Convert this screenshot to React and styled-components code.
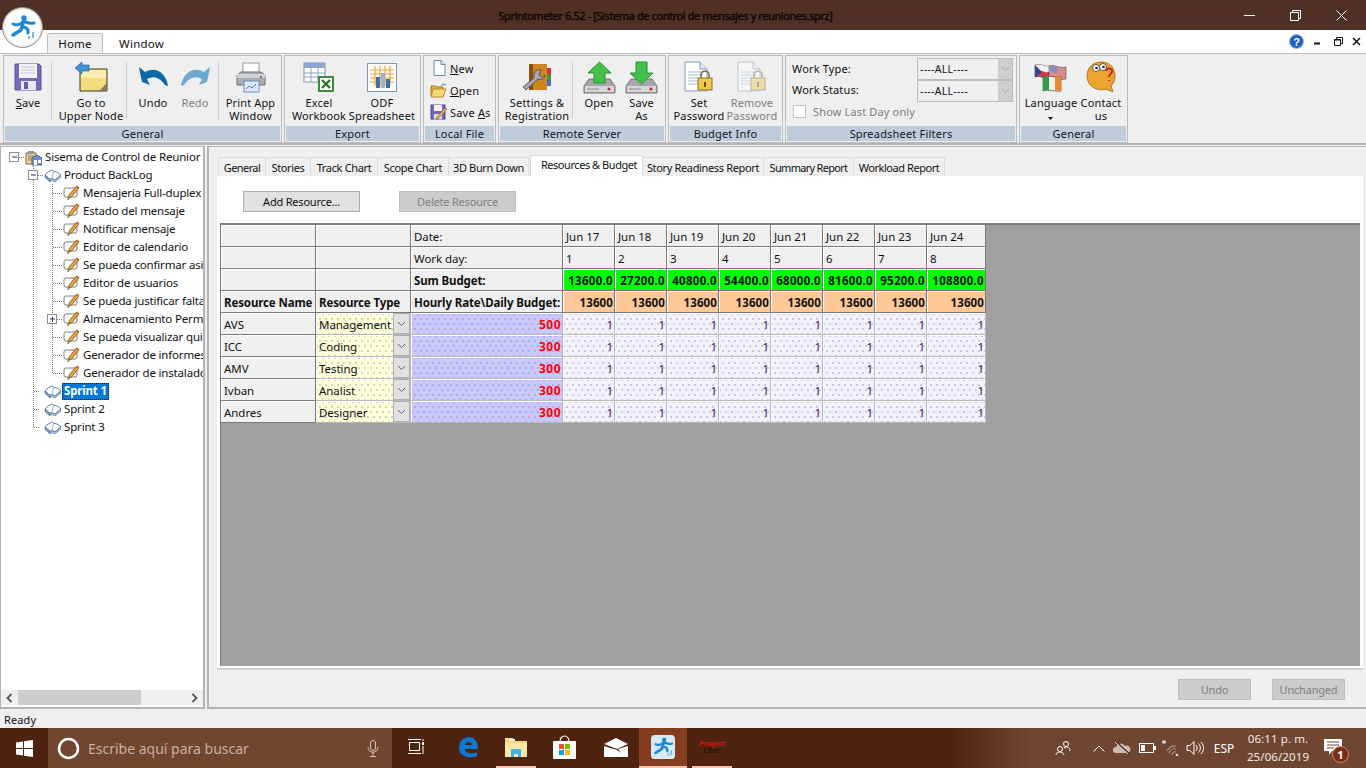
import React from 'react';
import styled, { createGlobalStyle } from 'styled-components';

const Global = createGlobalStyle`
  html, body { margin: 0; padding: 0; height: 768px; overflow: hidden; }
  body { font-family: "Noto Sans", "Open Sans", "Liberation Sans", sans-serif; font-size: 11.5px; color: #111; background: #efefef; }
  * { box-sizing: border-box; }
`;

const Window = styled.div`width: 1366px; height: 768px; display: flex; flex-direction: column; overflow: hidden; position: relative;`;

/* title bar */
const TitleBar = styled.div`height: 30px; background: #503024; display: flex; align-items: center; position: relative; padding-left: 499px;`;
const TitleText = styled.div`width: 333px; font-size: 11px; letter-spacing: -.4px; color: #0c0604; text-align: center; white-space: nowrap; -webkit-text-stroke: .35px #0c0604; margin-top: 1px; display: flex; justify-content: center;`;
const WinControls = styled.div`margin-left: auto; display: flex; width: 138px; height: 30px; margin-right: 2px;`;
const WinControl = styled.div`width: 46px; display: flex; align-items: center; justify-content: center;`;
const LogoBadge = styled.div`position: absolute; left: 2px; top: 7px; width: 41px; height: 41px; border-radius: 50%; background: #fff; border: 1px solid #8d8d8d; box-shadow: inset 0 0 3px #bbb; display: flex; align-items: center; justify-content: center; z-index: 3;`;

/* ribbon */
const TabStrip = styled.div`height: 23px; background: #fff; display: flex; align-items: flex-end; padding-left: 47px;`;
const RibbonTab = styled.div`
  width: ${p => p.$w}px; height: 20px; display: flex; align-items: center; justify-content: center; font-size: 11.5px; letter-spacing: .2px;
  background: ${p => p.$active ? '#efefef' : 'transparent'};
  border: 1px solid ${p => p.$active ? '#bdbdbd' : 'transparent'}; border-bottom: 0; border-radius: 3px 3px 0 0;
`;
const MdiIcons = styled.div`margin-left: auto; display: flex; align-items: center; height: 23px; padding-right: 1px;`;
const MdiSlot = styled.div`width: ${p => p.$w || 19}px; display: flex; justify-content: center; align-items: center;`;
const Ribbon = styled.div`height: 92px; background: #efefef; border-top: 1px solid #bdbdbd; border-bottom: 2px solid #b4b4b4; display: flex; gap: 2px; padding: 1px 0 0 3px;`;
const Group = styled.div`width: ${p => p.$w}px; height: 88px; border: 1px solid #bcbcbc; display: flex; flex-direction: column; padding: 1px;`;
const GroupBody = styled.div`height: 69px; display: flex;`;
const GroupCaption = styled.div`height: 15px; background: #bfcddb; text-align: center; font-size: 11px; line-height: 15px; letter-spacing: .2px; color: #10161c;`;
const BigButton = styled.div`width: ${p => p.$w}px; padding-left: ${p => p.$pl || 0}px; margin-right: ${p => p.$mr || 0}px; display: flex; flex-direction: column; align-items: center; color: ${p => p.$off ? '#7f7f7f' : '#111'}; flex: none;`;
const BigIcon = styled.div`height: 38px; display: flex; align-items: center; justify-content: center; padding-top: 2px;`;
const BigLabel = styled.div`font-size: 11px; line-height: 13px; text-align: center; white-space: nowrap; letter-spacing: .15px; margin-top: 1px;`;
const RibbonSep = styled.div`width: 1px; height: 57px; margin: 5px 0 0; background: #d0d0d0; flex: none;`;
const Accel = styled.span`text-decoration: underline;`;
const SmallCol = styled.div`display: flex; flex-direction: column; padding: 0 0 0 5px;`;
const SmallRow = styled.div`height: 22px; display: flex; align-items: center; gap: 3px; font-size: 11px; letter-spacing: .2px;`;
const SmallIcon = styled.div`width: 17px; display: flex; justify-content: center;`;
const FilterGrid = styled.div`display: grid; grid-template-columns: 125px 96px; grid-auto-rows: 22px; padding: 1px 0 0 5px; align-items: center; font-size: 11px; letter-spacing: .15px;`;
const FilterLabel = styled.span`margin-top: ${p => p.$up}px;`;
const Combo = styled.div`height: 22px; background: #f0f0f3; border: 1px solid #bcbcbc; display: flex; align-items: center; justify-content: space-between; padding-left: 2px; font-size: 10.5px; letter-spacing: .3px;`;
const ComboButton = styled.div`width: 14px; height: 20px; background: #cfcfcf; display: flex; align-items: center; justify-content: center;`;
const CheckRow = styled.div`grid-column: 1 / 3; display: flex; align-items: center; gap: 7px; color: #7d7d7d; padding-left: 1px; margin-top: -4px;`;
const CheckBox = styled.div`width: 13px; height: 13px; background: #fff; border: 1px solid #c4c4c4;`;

/* body */
const Main = styled.div`height: 564px; display: flex; gap: 2px; padding-top: 1px;`;
const TreePanel = styled.div`width: 205px; flex: none; background: #fff; border: 2px solid #b4b4b4; border-top-width: 1px; border-left-width: 1px; display: flex; flex-direction: column; justify-content: space-between; padding-top: 1px;`;
const TreeList = styled.div`overflow: hidden; width: 100%;`;
const TreeRow = styled.div`height: 18px; display: flex; align-items: center; white-space: nowrap; overflow: hidden; font-size: 11.5px; letter-spacing: -.17px;`;
const TreeGutter = styled.svg`flex: none; display: block;`;
const TreeLabel = styled.span`
  margin-left: 1px; padding: 0 2px; line-height: 16px; height: 17px;
  ${p => p.$sel && 'background:#0078d7;color:#fff;font-weight:700;outline:1px dotted #222;outline-offset:-1px;'}
`;
const HScroll = styled.div`height: 15px; background: #f0f0f0; display: flex; align-items: center; margin-bottom: 2px;`;
const ScrollEnd = styled.div`width: 17px; display: flex; align-items: center; justify-content: center; flex: none;`;
const ScrollThumb = styled.div`width: 123px; height: 15px; background: #cdcdcd;`;
const ScrollRest = styled.div`flex: 1;`;

const ContentPanel = styled.div`flex: 1; border: 2px solid #b4b4b4; border-top-width: 1px; border-right: 0; display: flex; flex-direction: column; padding: 8px 0 0 8px; background: #efefef;`;
const TabsRow = styled.div`height: 21px; display: flex; align-items: flex-end; padding-left: 1px;`;
const PageTab = styled.div`
  width: ${p => p.$w}px; height: ${p => p.$active ? 21 : 19}px; background: ${p => p.$active ? '#fff' : '#efefef'};
  border: 1px solid #dcdcdc; border-bottom: 0; border-left: ${p => p.$first ? '1px solid #dcdcdc' : 0};
  ${p => p.$active && 'border-left:1px solid #dcdcdc;margin-left:1px;padding-left:5px;'}
  display: flex; align-items: center; justify-content: center; font-size: 11px; white-space: nowrap; letter-spacing: ${p => p.$ls || '-.35px'};
  padding-bottom: ${p => p.$active ? 3 : 0}px;
`;
const Page = styled.div`width: 1146px; height: 494px; background: #fff; border-bottom: 2px solid #d4d4d4; display: flex; flex-direction: column; padding: 15px 3px 0 3px;`;
const PageTools = styled.div`display: flex; gap: 39px; padding-left: 23px; height: 32px;`;
const PushButton = styled.div`
  width: ${p => p.$w || 117}px; height: 21px; background: ${p => p.$off ? '#cccccc' : '#e1e1e1'}; border: 1px solid ${p => p.$off ? '#bfbfbf' : '#adadad'};
  color: ${p => p.$off ? '#808080' : '#111'}; display: flex; align-items: center; justify-content: center; font-size: 11px; letter-spacing: -.2px;
`;
const SheetArea = styled.div`height: 443px; background: #a0a0a0; border-top: 2px solid #7a7a7a; border-left: 1px solid #7a7a7a;`;
const Sheet = styled.div`display: grid; grid-template-columns: 95px 95px 152px repeat(7, 52px) 59px; grid-auto-rows: 22px; width: 765px;`;
const dots = `
  background-image:
    radial-gradient(circle at 1px 1px, #777 .5px, transparent .8px),
    radial-gradient(circle at 4px 6px, #777 .5px, transparent .8px);
  background-size: 6px 10px;
`;
const bgs = { head: '#efefef', green: '#00ff00', orange: '#ffc896', name: '#f0f0f0', type: '#ffffdc', rate: '#c8c8ff', day: '#f1f1ff' };
const spacing = { green: '.3px', orange: '.12px', rate: '.45px' };
const Cell = styled.div`
  background-color: ${p => bgs[p.$kind] || '#efefef'};
  ${p => (p.$kind === 'type' || p.$kind === 'rate' || p.$kind === 'day') && dots}
  border-right: 1px solid ${p => p.$data ? '#b9b9b9' : '#7a7a7a'};
  border-bottom: 1px solid ${p => p.$data ? '#b9b9b9' : '#7a7a7a'};
  ${p => p.$kind === 'name' && 'border-right-color:#7a7a7a;border-bottom-color:#7a7a7a;'}
  box-shadow: inset 1px 1px 0 #fff;
  display: flex; align-items: center; justify-content: ${p => p.$right ? 'flex-end' : 'flex-start'};
  padding: 1px ${p => p.$right ? 1 : 0}px 0 ${p => p.$right ? 0 : 3}px;
  font-size: ${p => p.$kind === 'rate' ? 12 : 11.5}px; white-space: nowrap; overflow: hidden;
  letter-spacing: ${p => spacing[p.$kind] || (p.$bold ? '-.12px' : '-.05px')};
  font-weight: ${p => p.$bold ? 700 : 400};
  color: ${p => p.$color || '#111'};
`;
const TypeCell = styled(Cell)`padding-right: 0; justify-content: space-between;`;
const CellDrop = styled.div`width: 17px; height: 21px; background: #e1e1e1; border: 1px solid #adadad; display: flex; align-items: center; justify-content: center; flex: none; margin-top: -1px;`;
const BottomBar = styled.div`flex: 1; display: flex; justify-content: flex-end; gap: 21px; padding: 9px 21px 0 0;`;
const StatusBar = styled.div`height: 19px; background: #efefef; font-size: 11px; display: flex; align-items: center; padding: 1px 0 0 4px; letter-spacing: .1px;`;

/* taskbar */
const Taskbar = styled.div`height: 40px; background: linear-gradient(90deg, #4e2410 0, #4e2410 950px, #6f4632 1030px, #6f4632 100%); display: flex; align-items: stretch; color: #fff; flex: none;`;
const StartBtn = styled.div`width: 48px; display: flex; align-items: center; justify-content: center;`;
const SearchBox = styled.div`width: 344px; background: #71462f; display: flex; align-items: center; padding-left: 9px; color: #c9b0a4; font-size: 14px;`;
const SearchText = styled.span`margin-left: 8px; flex: 1;`;
const MicSlot = styled.div`width: 38px; display: flex; justify-content: center;`;
const TaskSlots = styled.div`display: flex; align-items: stretch;`;
const TaskSlot = styled.div`
  width: ${p => p.$w || 48}px; display: flex; align-items: center; justify-content: center;
  background: ${p => p.$active ? '#853d1e' : 'transparent'};
  border-bottom: 2px solid ${p => p.$run ? '#f7c5ae' : 'transparent'};
`;
const Libre = styled.div`display: flex; flex-direction: column; font-size: 7.5px; line-height: 7px; font-weight: 700; text-align: center; color: #d11; font-family: "Liberation Sans", sans-serif;`;
const LibreSub = styled.span`color: #1a0d06; font-style: italic; font-weight: 400;`;
const Tray = styled.div`margin-left: auto; display: flex; align-items: center; height: 40px;`;
const TraySlot = styled.div`width: ${p => p.$w}px; display: flex; align-items: center; justify-content: center; flex: none; font-size: ${p => p.$fs || 12}px;`;
const Clock = styled.div`font-size: 11.5px; line-height: 18px; text-align: center; color: #f2e9e4; letter-spacing: .1px; white-space: nowrap;`;
const NotifWrap = styled.div`position: relative; width: 53px; height: 40px; display: flex; align-items: center; padding: 0 0 2px 11px; flex: none;`;
const NotifBadge = styled.div`position: absolute; left: 19px; top: 18px; width: 17px; height: 17px; border-radius: 50%; background: #7b2f14; border: 1px solid #c98f70; font-size: 11px; font-weight: 700; display: flex; align-items: center; justify-content: center;`;

/* icons */
const Logo = ({ s = 30, bg }) => (
  <svg width={s} height={s} viewBox="0 0 31 31">
    {bg && <rect x="0" y="0" width="31" height="31" rx="5" fill="#d6e9f7" />}
    <g fill="none" stroke="#1b87d6" strokeLinecap="round" strokeLinejoin="round">
      <circle cx="17" cy="6" r="2.700" fill="#1b87d6" stroke="none" />
      <path d="M6 12c4 2 8 0 11-3 3 2 6 3 10 2" strokeWidth="3" />
      <path d="M17 8l-3 10-8 5" strokeWidth="3.500" />
      <path d="M15 15c3 0 5 1 6 3l0 3" strokeWidth="3" />
    </g>
    <path d="M25 20h2v6h-2zM21 24h2v3h-2z" fill="#7db4dc" />
  </svg>
);
const Save = () => (
  <svg width="28" height="28" viewBox="0 0 28 28"><path d="M1 1h24l2 2v24H1z" fill="#7a68b8" stroke="#5d4f94" /><rect x="5" y="1" width="18" height="14" fill="#f4f4f8" /><path d="M7 4h14M7 7h14M7 10h14" stroke="#c5c5d8" /><rect x="7" y="18" width="15" height="9" fill="#e8e8f0" /><rect x="10" y="19" width="4" height="7" fill="#6a5aa8" /></svg>
);
const UpperNode = () => (
  <svg width="33" height="32" viewBox="0 0 33 32"><path d="M5 8h27v22H5z" fill="#f2dc80" stroke="#3f3a22" /><path d="M6 9h25v8H6z" fill="#fbefb0" /><path d="M24 30l8-8v8z" fill="#8a7a55" /><path d="M0 7l7-6v3h7v6H7v3z" fill="#3d8fd8" stroke="#2568a8" strokeWidth=".7" /></svg>
);
const Undo = ({ flip, c = '#0f6fae', c2 = '#0a4f86' }) => (
  <svg width="31" height="22" viewBox="0 0 31 22" style={{ transform: flip ? 'scaleX(-1)' : 'none' }}><path d="M1 1l3 15 8 3-3-6c5-3 12-3 18 6l3 1C28 7 18 0 7 6z" fill={c} /><path d="M1 1l2 11 6 1c5-3 12-3 18 6l3 1C29 10 19 3 8 8z" fill={c2} opacity=".25" /></svg>
);
const Printer = () => (
  <svg width="30" height="31" viewBox="0 0 30 31"><rect x="7" y="1" width="16" height="10" fill="#fff" stroke="#9a9a9a" /><path d="M1 13l4-3h20l4 3v10H1z" fill="#a9adb2" stroke="#6c6f73" /><rect x="1" y="12" width="28" height="4" fill="#cfd2d5" /><circle cx="25" cy="15" r="1" fill="#555" /><rect x="8" y="19" width="15" height="11" fill="#dce9f8" stroke="#6a8fc0" /><path d="M10 27l3-3 3 2 4-4" stroke="#3f7fc8" fill="none" /></svg>
);
const Excel = () => (
  <svg width="32" height="31" viewBox="0 0 32 31"><rect x="1" y="1" width="21" height="19" fill="#fff" stroke="#7f96b8" /><rect x="1" y="1" width="21" height="5" fill="#8ba6cc" /><path d="M8 1v19M15 1v19M1 11h21M1 15h21" stroke="#8ba6cc" /><rect x="15" y="14" width="16" height="16" fill="#3f8a3c" /><rect x="17" y="16" width="12" height="12" fill="#fff" /><path d="M19 18l8 8M27 18l-8 8" stroke="#26772a" strokeWidth="2.4" /></svg>
);
const Ods = () => (
  <svg width="30" height="29" viewBox="0 0 30 29"><rect x=".5" y=".5" width="29" height="28" fill="#fff" stroke="#7f96b8" /><rect x="2" y="2" width="26" height="25" fill="#fdfcf5" /><path d="M8 3v20M13 3v20M18 3v20M23 3v20M3 7h24M3 11h24M3 15h24M3 19h24" stroke="#f2a640" strokeWidth="1.2" /><rect x="9" y="14" width="4" height="11" fill="#3e6ea8" /><rect x="14" y="10" width="4" height="15" fill="#9bb4d4" /><rect x="19" y="16" width="4" height="9" fill="#3e6ea8" /></svg>
);
const NewDoc = () => (
  <svg width="14" height="16" viewBox="0 0 14 16"><path d="M2 .5h7l4 4v11H2z" fill="#fff" stroke="#6b87ab" /><path d="M9 .5v4h4" fill="#cfe0f2" stroke="#6b87ab" /></svg>
);
const OpenFolder = () => (
  <svg width="17" height="15" viewBox="0 0 17 15"><path d="M1 3h5l1 1h6v9H1z" fill="#e6b24a" stroke="#a77a22" /><path d="M3 6h13l-3 8H1z" fill="#f8d878" stroke="#b98a2a" /><path d="M11 3l2-2 3 1" stroke="#4b88c7" fill="none" /></svg>
);
const SaveAs = () => (
  <svg width="17" height="16" viewBox="0 0 17 16"><rect x="1" y="1" width="14" height="14" fill="#7568b8" stroke="#4e4490" /><rect x="4" y="1" width="8" height="6" fill="#f2f2f6" /><rect x="4" y="10" width="8" height="5" fill="#dedeea" /><path d="M7 13l8-9 2 1-8 9-3 1z" fill="#e7b25a" stroke="#8a5a24" strokeWidth=".6" /></svg>
);
const Settings = () => (
  <svg width="30" height="28" viewBox="0 0 30 28"><path d="M7 1h18v26H7z" fill="#d08420" /><path d="M7 1h4v26H7z" fill="#8a4d12" /><rect x="25" y="5" width="4" height="6" fill="#d33" /><rect x="25" y="11" width="4" height="6" fill="#3a9a3a" /><rect x="25" y="17" width="4" height="6" fill="#3f6fc0" /><path d="M1 24l3 3 12-11c3 1 6 0 7-4l-3 2-3-2 2-5c-5-1-8 3-7 8z" fill="#a6a6ae" stroke="#444" strokeWidth=".8" /></svg>
);
const Server = ({ down }) => (
  <svg width="33" height="33" viewBox="0 0 33 33">
    <path d="M6 18h21l5 7v7H1v-7z" fill="#a5a7aa" stroke="#77797c" /><path d="M2 25h29v6H2z" fill="#d5d6d8" /><path d="M4 28h12" stroke="#888" /><circle cx="26" cy="28" r="1.6" fill="#c23636" />
    {down ? <path d="M11 1h11v11h6L16.500 23 5 12h6z" fill="#45c04a" stroke="#2c8f35" /> : <path d="M16.500 1L28 12h-6v10H11V12H5z" fill="#45c04a" stroke="#2c8f35" />}
  </svg>
);
const LockDoc = ({ off }) => (
  <svg width="30" height="32" viewBox="0 0 30 32" opacity={off ? .45 : 1}>
    <path d="M1 1h15l7 7v22H1z" fill="#fff" stroke="#7e9cc0" /><path d="M16 1v7h7" fill="#dbe8f5" stroke="#7e9cc0" /><path d="M4 11h15M4 14h15M4 17h10M4 20h10M4 23h10" stroke="#9fb8d2" />
    <path d="M17 17v-3c0-5 8-5 8 0v3" fill="none" stroke="#7f6a3a" strokeWidth="1.5" /><rect x="14" y="17" width="14" height="12" fill="#f0c74f" stroke="#8a6a20" /><rect x="20" y="21" width="2" height="5" fill="#6a4d10" />
  </svg>
);
const Flags = () => (
  <svg width="34" height="31" viewBox="0 0 34 31"><path d="M1 3c5-2 9 2 14 1v12c-5 1-9-3-14-1z" fill="#d33b47" stroke="#333" strokeWidth=".6" /><path d="M1 3c5-2 9 2 14 1v6c-5 1-9-3-14-1z" fill="#f2f2f2" /><path d="M1 3v12l7-5z" fill="#2a4a8a" /><path d="M15 4c5-2 11 3 17 1v12c-6 2-11-3-17-1z" fill="#d98a8a" stroke="#555" strokeWidth=".6" /><path d="M15 4c3-1 5 0 8 1v6c-3-1-5-2-8-1z" fill="#8390bd" /><path d="M9 15c6-2 12 1 18 0v14c-6 1-12-2-18 0z" fill="#f0f0e8" stroke="#333" strokeWidth=".6" /><path d="M9 15l6-.500V28l-6 1z" fill="#2f9a4a" /><path d="M21 15l6 0V29l-6-.5z" fill="#ea8a2a" /></svg>
);
const Contact = () => (
  <svg width="32" height="36" viewBox="0 0 32 36"><path d="M16 3c9 0 14 6 14 14 0 5-2 8-4 10l2 6-7-3C12 33 2 27 2 17 2 9 8 3 16 3z" fill="#eca431" stroke="#b87618" /><circle cx="11" cy="9" r="3.500" fill="#fff" stroke="#555" /><circle cx="18" cy="8" r="3.500" fill="#fff" stroke="#555" /><circle cx="11.500" cy="9" r="1.300" fill="#222" /><circle cx="18.500" cy="8" r="1.300" fill="#222" /><path d="M21 12c1-4 7-3 6 1-1 2-3 2-3 5M24 21v1" fill="none" stroke="#c9261e" strokeWidth="2" /></svg>
);
const Chevron = ({ c = '#666' }) => (
  <svg width="9" height="6" viewBox="0 0 9 6"><path d="M1 1l3.500 3.500L8 1" fill="none" stroke={c} /></svg>
);
const Book = () => (
  <g>
    <path d="M1 9C3 6 6 5 8 4c1 0 1 1 1.500 1.500C12 5 15 7 17 9l-6 5c-2-1-4-2-5-.500z" fill="#fff" stroke="#5b7aa8" />
    <path d="M1 9l5 4.500-.2 2.300L1 11.500z" fill="#7098cc" stroke="#4b6a98" strokeWidth=".6" />
    <path d="M6 13.500c1-1.500 3-.5 5 .5l6-5v2l-6 5c-2-1-4-2-5.200-.2z" fill="#a8c2e0" stroke="#4b6a98" strokeWidth=".6" />
    <path d="M9.500 5.500L8 12" stroke="#9ab0cc" />
  </g>
);
const NoteIcon = () => (
  <g>
    <path d="M3 4h9a2 2 0 012 2v5a2 2 0 01-2 2H7l-2 3v-3H3a2 2 0 01-2-2V6a2 2 0 012-2z" fill="#fff" stroke="#7f7f7f" />
    <path d="M6 11l7-8.500 2.500 2-7 8.500-3 1z" fill="#e3a23d" stroke="#6f4a12" strokeWidth=".7" />
    <path d="M13 2.500l1-1 2.500 2-1 1z" fill="#b8662a" />
  </g>
);
const RootIcon = () => (
  <g><path d="M1 4h10v11H1z" fill="#e9d398" stroke="#7a6a3f" /><rect x="3" y="2" width="6" height="3" fill="#8a94a8" /><path d="M3 7h6M3 9h6M3 11h6" stroke="#8a7a4a" /><path d="M7 9l5-3 5 3v7H7z" fill="#6f8fc7" stroke="#4a6a9c" /><rect x="9" y="11" width="3" height="5" fill="#fff" /><rect x="13" y="11" width="3" height="3" fill="#fff" /></g>
);
const Expander = ({ x, plus }) => (
  <g>
    <rect x={x - 4.500} y="4.500" width="9" height="9" fill="#fff" stroke="#8f8f8f" />
    <path d={`M${x - 2} 9h5`} stroke="#24366c" />
    {plus && <path d={`M${x + .5} 7v5`} stroke="#24366c" />}
  </g>
);
const dotted = { stroke: '#777', strokeDasharray: '1 1', fill: 'none' };
const Gutter = ({ level, last, open, plus }) => {
  if (level === 0) return (
    <TreeGutter width="41" height="18"><Expander x={13} /><path d="M18 9.500h6" style={dotted} /><g transform="translate(24 1)"><RootIcon /></g></TreeGutter>
  );
  if (level === 1) return (
    <TreeGutter width="60" height="18">
      <path d={`M32.500 ${open ? 14 : 0}V${last ? 9 : 18}`} style={dotted} />
      <path d="M32.500 0V4" style={dotted} />
      <path d={`M${open ? 37 : 33} 9.500h6`} style={dotted} />
      {open && <Expander x={32} />}
      <g transform="translate(43 0)"><Book /></g>
    </TreeGutter>
  );
  return (
    <TreeGutter width="79" height="18">
      <path d="M32.500 0V18" style={dotted} />
      <path d={`M51.500 0V${last ? 9 : 18}`} style={dotted} />
      <path d="M52 9.500h10" style={dotted} />
      {plus && <Expander x={51} plus />}
      <g transform="translate(62 0)"><NoteIcon /></g>
    </TreeGutter>
  );
};

const stories = ['Mensajeria Full-duplex', 'Estado del mensaje', 'Notificar mensaje', 'Editor de calendario', 'Se pueda confirmar asi', 'Editor de usuarios', 'Se pueda justificar falta', 'Almacenamiento Perm', 'Se pueda visualizar qui', 'Generador de informes', 'Generador de instalado'];
const days = ['Jun 17', 'Jun 18', 'Jun 19', 'Jun 20', 'Jun 21', 'Jun 22', 'Jun 23', 'Jun 24'];
const sums = ['13600.0', '27200.0', '40800.0', '54400.0', '68000.0', '81600.0', '95200.0', '108800.0'];
const people = [['AVS', 'Management', 500], ['ICC', 'Coding', 300], ['AMV', 'Testing', 300], ['Ivban', 'Analist', 300], ['Andres', 'Designer', 300]];
const tabs = [
  { t: 'General', w: 48, first: true, ls: '-.6px' }, { t: 'Stories', w: 45 }, { t: 'Track Chart', w: 67 }, { t: 'Scope Chart', w: 71 },
  { t: '3D Burn Down', w: 80 }, { t: 'Resources & Budget', w: 113, active: true, ls: '-.45px' }, { t: 'Story Readiness Report', w: 121 },
  { t: 'Summary Report', w: 90, ls: '-.7px' }, { t: 'Workload Report', w: 91, ls: '-.45px' },
];

export default function App() {
  return (
    <Window>
      <Global />
      <TitleBar>
        <LogoBadge><Logo s={31} /></LogoBadge>
        <TitleText>Sprintometer 6.52 - [Sistema de control de mensajes y reuniones.sprz]</TitleText>
        <WinControls>
          <WinControl><svg width="11" height="11" viewBox="0 0 11 11"><path d="M0 5.500h11" stroke="#fff" /></svg></WinControl>
          <WinControl><svg width="11" height="11" viewBox="0 0 11 11"><path d="M.5 2.500h8v8h-8zM2.500 2.500v-2h8v8h-2" fill="none" stroke="#fff" /></svg></WinControl>
          <WinControl><svg width="11" height="11" viewBox="0 0 11 11"><path d="M.5.500l10 10M10.500.500l-10 10" stroke="#fff" /></svg></WinControl>
        </WinControls>
      </TitleBar>
      <TabStrip>
        <RibbonTab $w={56} $active>Home</RibbonTab>
        <RibbonTab $w={77}>Window</RibbonTab>
        <MdiIcons>
          <MdiSlot $w={19}><svg width="15" height="15" viewBox="0 0 15 15"><circle cx="7.500" cy="7.500" r="7" fill="#1f5fc0" stroke="#9fc0ea" /><text x="7.500" y="11.500" textAnchor="middle" fontSize="11" fontWeight="700" fill="#fff" fontFamily="Liberation Sans">?</text></svg></MdiSlot>
          <MdiSlot $w={23}><svg width="7" height="7" viewBox="0 0 7 7"><path d="M0 5.500h6" stroke="#111" strokeWidth="2" /></svg></MdiSlot>
          <MdiSlot $w={18}><svg width="9" height="9" viewBox="0 0 9 9"><path d="M.5 2.500h6v6h-6zM2.500 2.500v-2h6v6h-2" fill="none" stroke="#111" /><path d="M.5 3h6" stroke="#111" /></svg></MdiSlot>
          <MdiSlot $w={18}><svg width="9" height="9" viewBox="0 0 9 9"><path d="M1 1l7 7M8 1l-7 7" stroke="#111" strokeWidth="1.500" /></svg></MdiSlot>
        </MdiIcons>
      </TabStrip>
      <Ribbon>
        <Group $w={279}>
          <GroupBody>
            <BigButton $w={46}><BigIcon><Save /></BigIcon><BigLabel><Accel>S</Accel>ave</BigLabel></BigButton>
            <RibbonSep />
            <BigButton $w={74} $pl={4}><BigIcon><UpperNode /></BigIcon><BigLabel>Go to<br />Upper Node</BigLabel></BigButton>
            <RibbonSep />
            <BigButton $w={50} $pl={2}><BigIcon><Undo /></BigIcon><BigLabel>Undo</BigLabel></BigButton>
            <BigButton $w={34} $pl={2} $mr={7} $off><BigIcon><Undo flip c="#6fa9cf" c2="#6fa9cf" /></BigIcon><BigLabel>Redo</BigLabel></BigButton>
            <RibbonSep />
            <BigButton $w={60} $pl={3}><BigIcon><Printer /></BigIcon><BigLabel>Print App<br />Window</BigLabel></BigButton>
          </GroupBody>
          <GroupCaption>General</GroupCaption>
        </Group>
        <Group $w={137}>
          <GroupBody>
            <BigButton $w={66}><BigIcon><Excel /></BigIcon><BigLabel>Excel<br />Workbook</BigLabel></BigButton>
            <BigButton $w={60}><BigIcon><Ods /></BigIcon><BigLabel>ODF<br />Spreadsheet</BigLabel></BigButton>
          </GroupBody>
          <GroupCaption>Export</GroupCaption>
        </Group>
        <Group $w={73}>
          <GroupBody>
            <SmallCol>
              <SmallRow><SmallIcon><NewDoc /></SmallIcon><span><Accel>N</Accel>ew</span></SmallRow>
              <SmallRow><SmallIcon><OpenFolder /></SmallIcon><span><Accel>O</Accel>pen</span></SmallRow>
              <SmallRow><SmallIcon><SaveAs /></SmallIcon><span>Save <Accel>A</Accel>s</span></SmallRow>
            </SmallCol>
          </GroupBody>
          <GroupCaption>Local File</GroupCaption>
        </Group>
        <Group $w={168}>
          <GroupBody>
            <BigButton $w={72} $pl={2}><BigIcon><Settings /></BigIcon><BigLabel>Settings &amp;<br />Registration</BigLabel></BigButton>
            <RibbonSep />
            <BigButton $w={52}><BigIcon><Server /></BigIcon><BigLabel>Open</BigLabel></BigButton>
            <BigButton $w={33}><BigIcon><Server down /></BigIcon><BigLabel>Save<br />As</BigLabel></BigButton>
          </GroupBody>
          <GroupCaption>Remote Server</GroupCaption>
        </Group>
        <Group $w={115}>
          <GroupBody>
            <BigButton $w={58}><BigIcon><LockDoc /></BigIcon><BigLabel>Set<br />Password</BigLabel></BigButton>
            <BigButton $w={48} $off><BigIcon><LockDoc off /></BigIcon><BigLabel>Remove<br />Password</BigLabel></BigButton>
          </GroupBody>
          <GroupCaption>Budget Info</GroupCaption>
        </Group>
        <Group $w={232}>
          <GroupBody>
            <FilterGrid>
              <FilterLabel $up={-2}>Work Type:</FilterLabel>
              <Combo><span>----ALL----</span><ComboButton><Chevron c="#a0a0a0" /></ComboButton></Combo>
              <FilterLabel $up={-4}>Work Status:</FilterLabel>
              <Combo><span>----ALL----</span><ComboButton><Chevron c="#a0a0a0" /></ComboButton></Combo>
              <CheckRow><CheckBox /><span>Show Last Day only</span></CheckRow>
            </FilterGrid>
          </GroupBody>
          <GroupCaption>Spreadsheet Filters</GroupCaption>
        </Group>
        <Group $w={109}>
          <GroupBody>
            <BigButton $w={60}><BigIcon><Flags /></BigIcon><BigLabel>Language<br /><svg width="5" height="3" viewBox="0 0 5 3"><path d="M0 0h5L2.500 3z" fill="#111" /></svg></BigLabel></BigButton>
            <BigButton $w={40}><BigIcon><Contact /></BigIcon><BigLabel>Contact<br />us</BigLabel></BigButton>
          </GroupBody>
          <GroupCaption>General</GroupCaption>
        </Group>
      </Ribbon>
      <Main>
        <TreePanel>
          <TreeList>
            <TreeRow><Gutter level={0} /><TreeLabel>Sisema de Control de Reunior</TreeLabel></TreeRow>
            <TreeRow><Gutter level={1} open /><TreeLabel>Product BackLog</TreeLabel></TreeRow>
            {stories.map((s, i) => (
              <TreeRow key={s}><Gutter level={2} plus={i === 7} last={i === stories.length - 1} /><TreeLabel>{s}</TreeLabel></TreeRow>
            ))}
            <TreeRow><Gutter level={1} /><TreeLabel $sel>Sprint 1</TreeLabel></TreeRow>
            <TreeRow><Gutter level={1} /><TreeLabel>Sprint 2</TreeLabel></TreeRow>
            <TreeRow><Gutter level={1} last /><TreeLabel>Sprint 3</TreeLabel></TreeRow>
          </TreeList>
          <HScroll>
            <ScrollEnd><svg width="7" height="10" viewBox="0 0 7 10"><path d="M5.500 1L1.500 5l4 4" fill="none" stroke="#555" strokeWidth="1.800" /></svg></ScrollEnd>
            <ScrollThumb />
            <ScrollRest />
            <ScrollEnd><svg width="7" height="10" viewBox="0 0 7 10"><path d="M1.500 1l4 4-4 4" fill="none" stroke="#555" strokeWidth="1.800" /></svg></ScrollEnd>
          </HScroll>
        </TreePanel>
        <ContentPanel>
          <TabsRow>
            {tabs.map(tab => <PageTab key={tab.t} $w={tab.w} $first={tab.first} $active={tab.active} $ls={tab.ls}>{tab.t}</PageTab>)}
          </TabsRow>
          <Page>
            <PageTools>
              <PushButton>Add Resource...</PushButton>
              <PushButton $off>Delete Resource</PushButton>
            </PageTools>
            <SheetArea>
              <Sheet>
                <Cell /><Cell /><Cell>Date:</Cell>
                {days.map(d => <Cell key={d}>{d}</Cell>)}
                <Cell /><Cell /><Cell>Work day:</Cell>
                {days.map((d, i) => <Cell key={d}>{i + 1}</Cell>)}
                <Cell /><Cell /><Cell $bold>Sum Budget:</Cell>
                {sums.map(d => <Cell key={d} $kind="green" $bold $right>{d}</Cell>)}
                <Cell $bold>Resource Name</Cell><Cell $bold>Resource Type</Cell><Cell $bold>Hourly Rate\Daily Budget:</Cell>
                {days.map(d => <Cell key={d} $kind="orange" $bold $right>13600</Cell>)}
                {people.map(([n, t, r]) => (
                  <React.Fragment key={n}>
                    <Cell $kind="name">{n}</Cell>
                    <TypeCell $kind="type" $data>{t}<CellDrop><Chevron /></CellDrop></TypeCell>
                    <Cell $kind="rate" $data $right $bold $color="#ff0000">{r}</Cell>
                    {days.map(d => <Cell key={d} $kind="day" $data $right $color="#3a0a60">1</Cell>)}
                  </React.Fragment>
                ))}
              </Sheet>
            </SheetArea>
          </Page>
          <BottomBar>
            <PushButton $off $w={73}>Undo</PushButton>
            <PushButton $off $w={73}>Unchanged</PushButton>
          </BottomBar>
        </ContentPanel>
      </Main>
      <StatusBar>Ready</StatusBar>
      <Taskbar>
        <StartBtn><svg width="17" height="17" viewBox="0 0 17 17"><path d="M0 2.400l7-1v6.600H0zM8 1.200L17 0v8H8zM0 9h7v6.600l-7-1zM8 9h9v8l-9-1.200z" fill="#fff" /></svg></StartBtn>
        <SearchBox>
          <svg width="23" height="23" viewBox="0 0 23 23"><circle cx="11.500" cy="11.500" r="9.500" fill="none" stroke="#fff" strokeWidth="2.500" /></svg>
          <SearchText>Escribe aquí para buscar</SearchText>
          <MicSlot><svg width="12" height="17" viewBox="0 0 12 17"><rect x="3.500" y=".5" width="5" height="10" rx="2.500" fill="none" stroke="#d6c3b8" /><path d="M1 7c0 7 10 7 10 0M6 12v4M3 16.500h6" fill="none" stroke="#d6c3b8" /></svg></MicSlot>
        </SearchBox>
        <TaskSlots>
          <TaskSlot $w={48}><svg width="16" height="16" viewBox="0 0 16 16"><path d="M1.500 3.500h10v8h-10zM0 .5h13M0 14.500h13" fill="none" stroke="#fff" /><rect x="14" y="3" width="2" height="3" fill="#fff" /><path d="M15 7v8M15 0v2" stroke="#fff" /></svg></TaskSlot>
          <TaskSlot $w={56}><svg width="20" height="21" viewBox="0 0 20 21"><path d="M1 11C1 4 6 0 11 0c5 0 9 4 9 12H7c0 4 6 6 12 3v4c-7 3-18 1-18-8zM7 8h7c0-4-6-4-7 0z" fill="#0a78d7" /></svg></TaskSlot>
          <TaskSlot $run $w={40}><svg width="22" height="19" viewBox="0 0 22 19"><path d="M0 0h8l2 3h12v16H0z" fill="#f6d67a" /><path d="M0 5h22v14H0z" fill="#fde7a4" /><path d="M4 1h6v2H4z" fill="#fff" /><path d="M6 11h10v8h-3v-3h-4v3H6z" fill="#3db5e8" /></svg></TaskSlot>
          <TaskSlot $w={56}><svg width="23" height="24" viewBox="0 0 23 24"><rect y="6" width="23" height="18" rx="1" fill="#fff" /><path d="M7 7c0-8 9-8 9 0" fill="none" stroke="#fff" strokeWidth="1.200" /><rect x="6" y="9" width="5" height="5" fill="#f25022" /><rect x="12" y="9" width="5" height="5" fill="#7fba00" /><rect x="6" y="15" width="5" height="5" fill="#00a4ef" /><rect x="12" y="15" width="5" height="5" fill="#ffb900" /></svg></TaskSlot>
          <TaskSlot $w={47}><svg width="24" height="19" viewBox="0 0 24 19"><path d="M0 6L12 0l12 6-11 5z" fill="#fff" /><path d="M0 8l13 4 4 3-3-4 10-3v11H0z" fill="#fff" /></svg></TaskSlot>
          <TaskSlot $run $active $w={48}><Logo s={24} bg /></TaskSlot>
          <TaskSlot $w={5} />
          <TaskSlot $run $w={40}><Libre>Project<LibreSub>Libre</LibreSub></Libre></TaskSlot>
        </TaskSlots>
        <Tray>
          <TraySlot $w={60}><svg width="16" height="15" viewBox="0 0 16 15"><circle cx="5" cy="8" r="2.500" fill="none" stroke="#fff" /><circle cx="11" cy="3" r="2.500" fill="none" stroke="#fff" /><path d="M1 14c0-4 7-4 8 0M9 7c3-2 6-1 6 3" fill="none" stroke="#fff" /></svg></TraySlot>
          <TraySlot $w={12}><svg width="12" height="7" viewBox="0 0 12 7"><path d="M.5 6.500l5.500-5.500 5.500 5.500" fill="none" stroke="#fff" /></svg></TraySlot>
          <TraySlot $w={34}><svg width="18" height="14" viewBox="0 0 18 14"><path d="M3 12a3 3 0 010-6 5 5 0 019-1 3.500 3.500 0 013 7z" fill="#c9bdb6" /><path d="M3 1l13 12" stroke="#4c2c1e" strokeWidth="2" /><path d="M2 1l13 12" stroke="#eee" /></svg></TraySlot>
          <TraySlot $w={17}><svg width="17" height="10" viewBox="0 0 17 10"><rect x=".5" y=".5" width="14" height="9" fill="none" stroke="#fff" /><rect x="2" y="2" width="4" height="6" fill="#fff" /><rect x="15" y="3" width="2" height="4" fill="#fff" /></svg></TraySlot>
          <TraySlot $w={29}><svg width="18" height="17" viewBox="0 0 18 17"><path d="M2 0v4M0 1l4 2M4 1L0 3" stroke="#fff" strokeWidth=".8" /><path d="M5 11a9 9 0 019-5M7 13a6 6 0 017-4M10 15a3 3 0 014-3" fill="none" stroke="#a99a92" strokeWidth="1.100" /><circle cx="15" cy="15" r="1.300" fill="#ddd" /></svg></TraySlot>
          <TraySlot $w={20}><svg width="18" height="14" viewBox="0 0 18 14"><path d="M1 4.500h3l4-4v13l-4-4H1z" fill="none" stroke="#fff" /><path d="M10 4c1.500 2 1.500 4 0 6M12.500 2.500c2.500 3 2.500 6 0 9M15 1c3.500 4 3.500 8 0 12" fill="none" stroke="#fff" /></svg></TraySlot>
          <TraySlot $w={38} $fs={12}>ESP</TraySlot>
          <TraySlot $w={70}><Clock>06:11 p. m.<br />25/06/2019</Clock></TraySlot>
          <NotifWrap>
            <svg width="18" height="16" viewBox="0 0 18 16"><path d="M0 0h18v12H8l-3 4v-4H0z" fill="#fff" /><path d="M3 3h12M3 6h12M3 9h7" stroke="#6f4632" /></svg>
            <NotifBadge>1</NotifBadge>
          </NotifWrap>
        </Tray>
      </Taskbar>
    </Window>
  );
}
